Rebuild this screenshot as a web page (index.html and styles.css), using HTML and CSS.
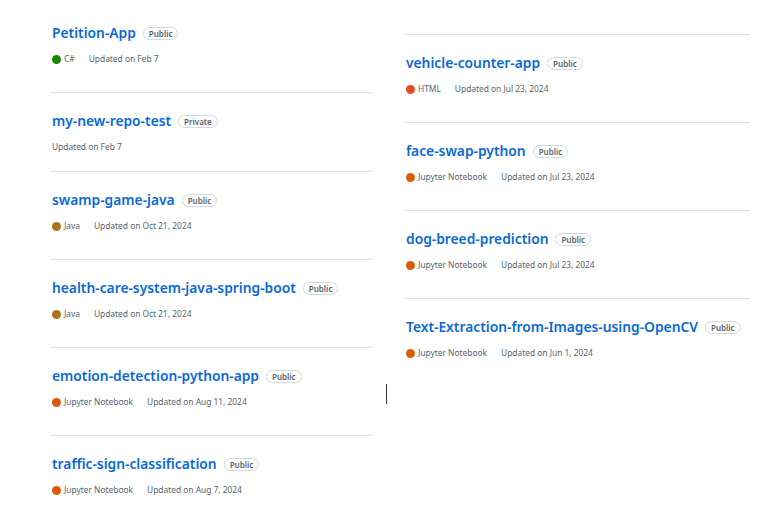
FILE: index.html
```html
<!DOCTYPE html>
<html lang="en">
<head>
<meta charset="utf-8">
<title>Repositories</title>
<link rel="stylesheet" href="styles.css">
</head>
<body>
<div class="page">
  <ul class="col col-left">
    <li class="repo">
      <div class="title-row"><a class="name" href="#">Petition-App</a><span class="badge">Public</span></div>
      <div class="meta"><span class="lang"><span class="dot dot-csharp"></span>C#</span><span class="updated">Updated on Feb 7</span></div>
    </li>
    <li class="repo short">
      <div class="title-row"><a class="name" href="#">my-new-repo-test</a><span class="badge">Private</span></div>
      <div class="meta"><span class="updated">Updated on Feb 7</span></div>
    </li>
    <li class="repo">
      <div class="title-row"><a class="name" href="#">swamp-game-java</a><span class="badge">Public</span></div>
      <div class="meta"><span class="lang"><span class="dot dot-java"></span>Java</span><span class="updated">Updated on Oct 21, 2024</span></div>
    </li>
    <li class="repo">
      <div class="title-row"><a class="name" href="#">health-care-system-java-spring-boot</a><span class="badge">Public</span></div>
      <div class="meta"><span class="lang"><span class="dot dot-java"></span>Java</span><span class="updated">Updated on Oct 21, 2024</span></div>
    </li>
    <li class="repo">
      <div class="title-row"><a class="name" href="#">emotion-detection-python-app</a><span class="badge">Public</span></div>
      <div class="meta"><span class="lang"><span class="dot dot-jupyter"></span>Jupyter Notebook</span><span class="updated">Updated on Aug 11, 2024</span></div>
    </li>
    <li class="repo">
      <div class="title-row"><a class="name" href="#">traffic-sign-classification</a><span class="badge">Public</span></div>
      <div class="meta"><span class="lang"><span class="dot dot-jupyter"></span>Jupyter Notebook</span><span class="updated">Updated on Aug 7, 2024</span></div>
    </li>
  </ul>
  <ul class="col col-right">
    <li class="repo">
      <div class="title-row"><a class="name" href="#">vehicle-counter-app</a><span class="badge">Public</span></div>
      <div class="meta"><span class="lang"><span class="dot dot-html"></span>HTML</span><span class="updated">Updated on Jul 23, 2024</span></div>
    </li>
    <li class="repo">
      <div class="title-row"><a class="name" href="#">face-swap-python</a><span class="badge">Public</span></div>
      <div class="meta"><span class="lang"><span class="dot dot-jupyter"></span>Jupyter Notebook</span><span class="updated">Updated on Jul 23, 2024</span></div>
    </li>
    <li class="repo">
      <div class="title-row"><a class="name" href="#">dog-breed-prediction</a><span class="badge">Public</span></div>
      <div class="meta"><span class="lang"><span class="dot dot-jupyter"></span>Jupyter Notebook</span><span class="updated">Updated on Jul 23, 2024</span></div>
    </li>
    <li class="repo">
      <div class="title-row"><a class="name" href="#">Text-Extraction-from-Images-using-OpenCV</a><span class="badge">Public</span></div>
      <div class="meta"><span class="lang"><span class="dot dot-jupyter"></span>Jupyter Notebook</span><span class="updated">Updated on Jun 1, 2024</span></div>
    </li>
  </ul>
</div>
<span class="caret"></span>
</body>
</html>
```
FILE: styles.css
```css
html, body {
  margin: 0;
  padding: 0;
  background: #ffffff;
}

body {
  font-family: "Noto Sans", "Liberation Sans", sans-serif;
  color: #59636e;
  width: 768px;
  height: 513px;
  overflow: hidden;
  position: relative;
}

.page {
  display: flex;
  align-items: flex-start;
  gap: 33px;
  padding-left: 51px;
}

.col {
  list-style: none;
  margin: 0;
  padding: 0;
}

.col-left {
  width: 321px;
  margin-top: 5px;
}

.col-right {
  width: 345px;
  margin-top: 34px;
  border-top: 1px solid #d8dee4;
}

.repo {
  padding: 18px 0 27px 1px;
  border-bottom: 1px solid #d8dee4;
}

.repo.short {
  padding-bottom: 18px;
}

.repo:last-child {
  border-bottom: none;
}

.title-row {
  display: flex;
  align-items: center;
  gap: 7px;
  height: 20px;
}

.name {
  font-size: 13.8px;
  font-weight: 600;
  line-height: 20px;
  color: #0969da;
  text-decoration: none;
  white-space: nowrap;
}

.badge {
  font-size: 8px;
  font-weight: 600;
  line-height: 11px;
  color: #59636e;
  border: 1px solid #d1d9e0;
  border-radius: 999px;
  padding: 0 5px;
}

.meta {
  display: flex;
  align-items: center;
  margin-top: 10px;
  height: 12px;
  font-size: 8.4px;
  line-height: 12px;
  color: #59636e;
}

.lang {
  display: inline-flex;
  align-items: center;
  gap: 3px;
  margin-right: 14px;
}

.dot {
  width: 9px;
  height: 9px;
  border-radius: 50%;
  display: inline-block;
}

.dot-csharp { background: #178600; }
.dot-java { background: #b07219; }
.dot-html { background: #e34c26; }
.dot-jupyter { background: #da5b0b; }

.caret {
  position: absolute;
  left: 386px;
  top: 384px;
  width: 1px;
  height: 20px;
  background: #333333;
}
```
